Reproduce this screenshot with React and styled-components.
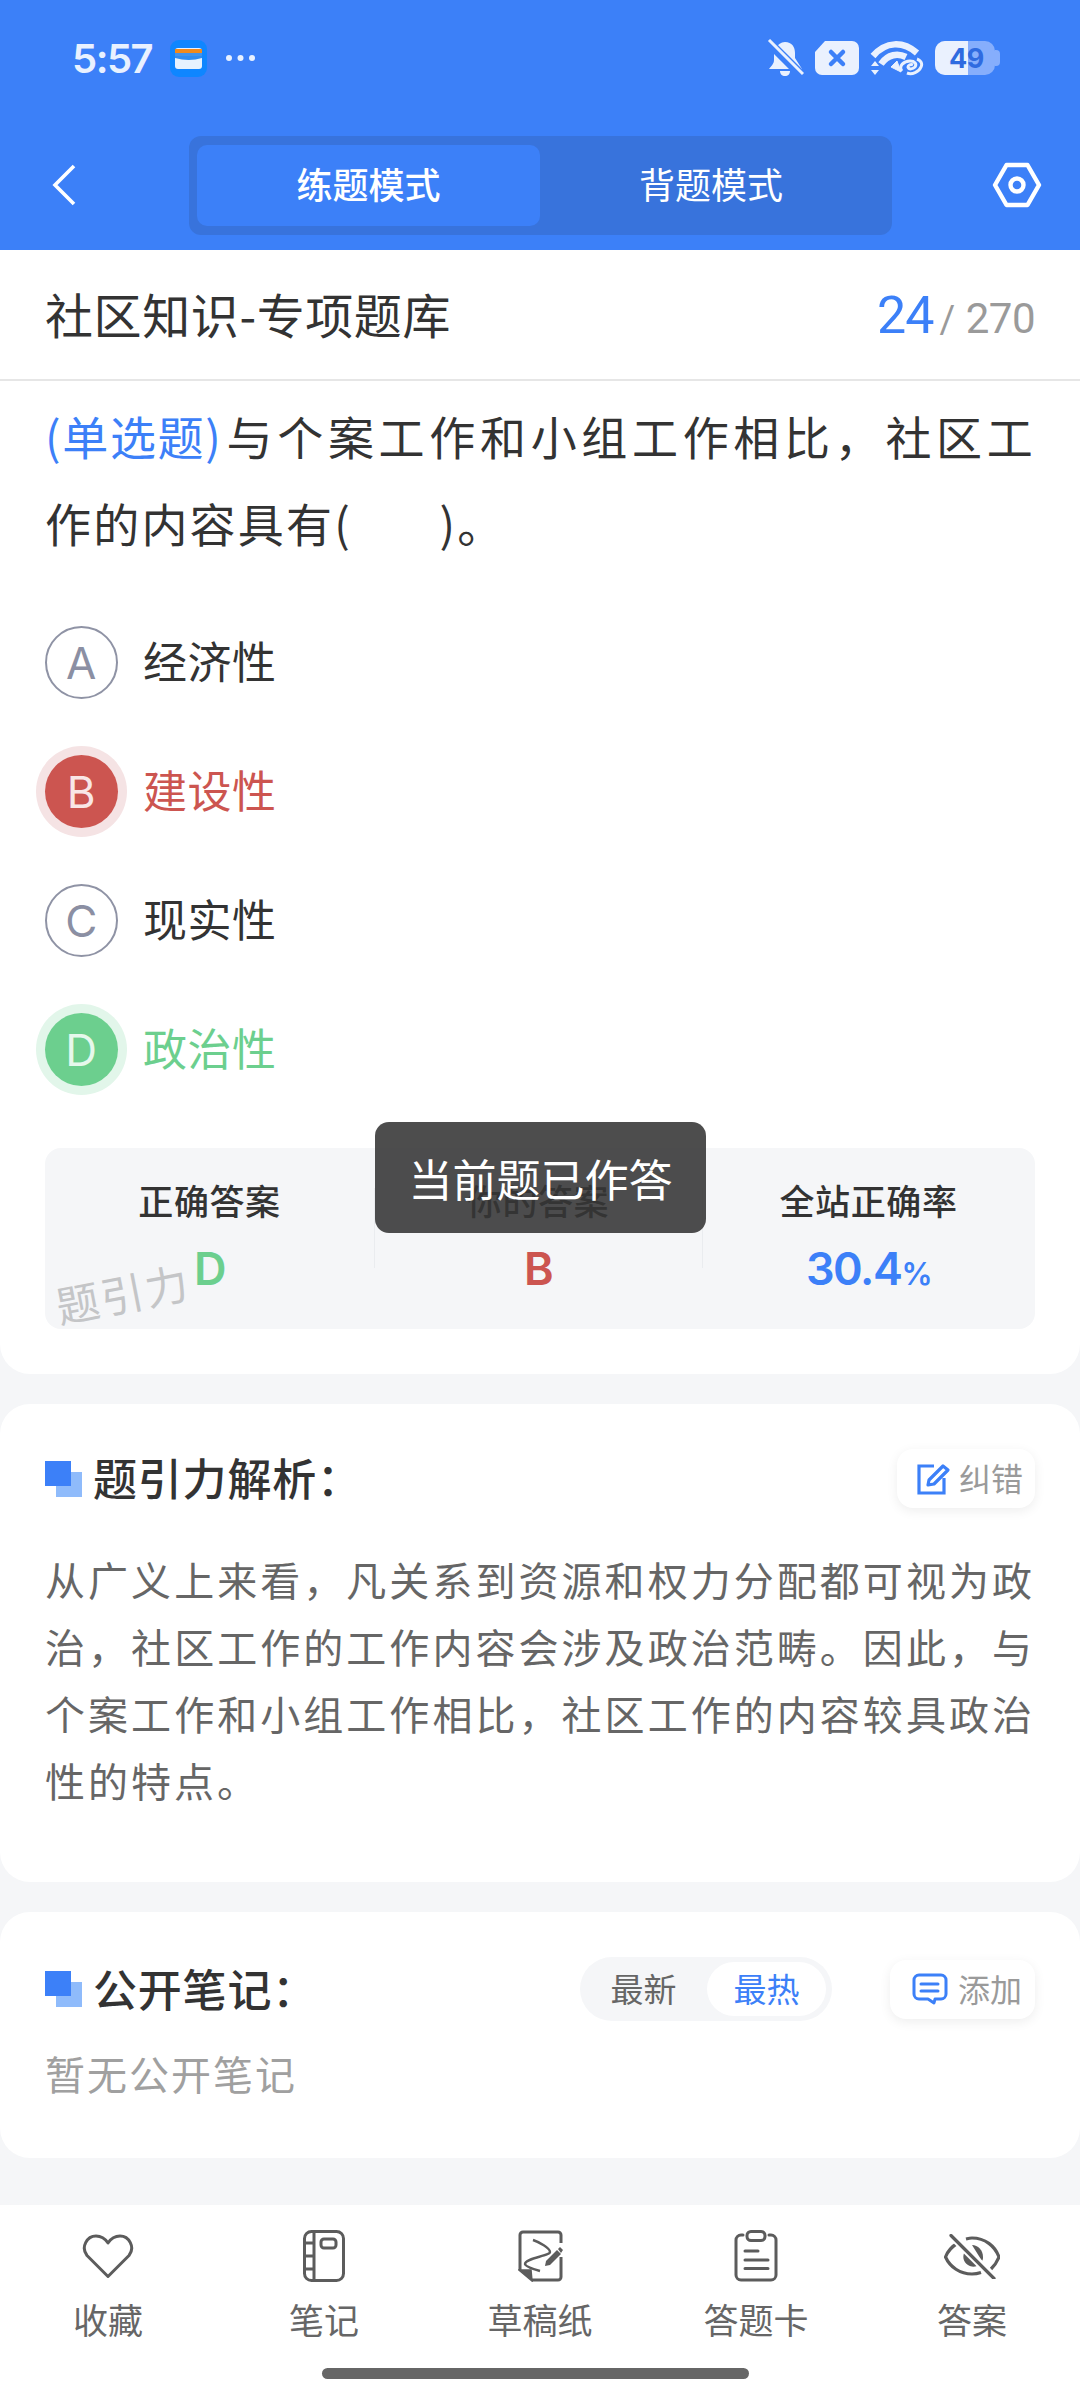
import React from "react"
import styled, { createGlobalStyle, css } from "styled-components"

const BLUE = "#3c80f8"
const RED = "#cc5550"
const GREEN = "#6ccf8e"
const INK = "#333333"
const CJK = `"Noto Sans CJK SC", "Noto Sans", sans-serif`
const LATIN = `Inter, "Noto Sans CJK SC", sans-serif`

const Global = createGlobalStyle`
  html, body { margin: 0; padding: 0; background: #f5f6f8; }
  * { box-sizing: border-box; }
  body { font-family: ${CJK}; color: ${INK}; }
`

const Page = styled.div`
  position: relative;
  width: 1080px;
  height: 2400px;
  overflow: hidden;
  display: flex;
  flex-direction: column;
  background: #f5f6f8;
`

const StatusBar = styled.div`
  height: 116px;
  flex: none;
  padding: 0 80px 0 72px;
  display: flex;
  align-items: center;
  justify-content: space-between;
  background: ${BLUE};
`

const StatusSide = styled.div`
  display: flex;
  align-items: center;
  gap: ${p => p.$gap}px;
`

const Time = styled.span`
  font-family: ${LATIN};
  font-size: 40px;
  font-weight: 600;
  letter-spacing: -1.5px;
  color: #e9f1ff;
`

const NavBar = styled.div`
  height: 134px;
  flex: none;
  display: grid;
  grid-template-columns: 189px 703px 1fr;
  align-items: start;
  background: ${BLUE};
`

const BackSlot = styled.div`
  margin: 47px 0 0 50px;
  line-height: 0;
`

const GearSlot = styled.div`
  justify-self: end;
  margin: 46px 38px 0 0;
  line-height: 0;
`

const Segment = styled.div`
  margin-top: 20px;
  height: 99px;
  padding: 9px 10px 9px 8px;
  display: grid;
  grid-template-columns: 343px 1fr;
  border-radius: 12px;
  background: #3873dc;
`

const SegmentItem = styled.div`
  padding-bottom: 5px;
  display: flex;
  align-items: center;
  justify-content: center;
  border-radius: 10px;
  font-size: 36px;
  font-weight: ${p => (p.$active ? 500 : 400)};
  color: #fff;
  ${p => p.$active && css`background: ${BLUE};`}
`

const Main = styled.div`
  flex: 1;
  display: flex;
  flex-direction: column;
  gap: 30px;
`

const QuestionCard = styled.section`
  background: #fff;
  border-radius: 0 0 30px 30px;
  padding-bottom: 45px;
`

const TitleRow = styled.div`
  height: 131px;
  padding: 0 45px 4px;
  display: flex;
  align-items: center;
  justify-content: space-between;
  border-bottom: 2px solid #e6e6e6;
`

const BankTitle = styled.h1`
  margin: 0;
  font-size: 48px;
  font-weight: 400;
  letter-spacing: 0.6px;
  color: ${INK};
`

const Counter = styled.div`
  padding-top: 5px;
  display: flex;
  align-items: baseline;
  font-family: Roboto, sans-serif;
  font-size: 42px;
  letter-spacing: -0.5px;
  color: #9a9a9a;
`

const CounterNow = styled.span`
  font-size: 52px;
  letter-spacing: -1px;
  color: ${BLUE};
`

const CounterSlash = styled.span`
  margin: 0 11px 0 6px;
  font-size: 38px;
`

const Question = styled.p`
  margin: 11px 45px 0;
  font-size: 46px;
  line-height: 87px;
  letter-spacing: 2.2px;
  text-align: justify;
  color: ${INK};
`

const QuestionType = styled.span`
  margin-right: 4px;
  letter-spacing: -0.8px;
  color: ${BLUE};
`

const KeepTogether = styled.span`
  white-space: nowrap;
`

const Options = styled.div`
  margin: 32px 45px 0;
  display: flex;
  flex-direction: column;
`

const Option = styled.div`
  height: 129px;
  display: flex;
  align-items: center;
  gap: 25px;
  font-size: 44px;
  letter-spacing: 0.5px;
  color: ${p => (p.$state === "wrong" ? RED : p.$state === "right" ? GREEN : INK)};
`

const OptionText = styled.span`
  padding-bottom: 5px;
`

const Letter = styled.span`
  width: 73px;
  height: 73px;
  flex: none;
  display: flex;
  align-items: center;
  justify-content: center;
  border-radius: 50%;
  font-family: ${LATIN};
  font-size: 44px;
  font-weight: 400;
  ${p => !p.$state && css`
    border: 2px solid #8f93a5;
    color: #8b8fa3;
  `}
  ${p => p.$state === "wrong" && css`
    background: ${RED};
    color: #f9e6e6;
    box-shadow: 0 0 0 9px #f5e3e4;
  `}
  ${p => p.$state === "right" && css`
    background: ${GREEN};
    color: #e6f8ec;
    box-shadow: 0 0 0 9px #e2f6ea;
  `}
`

const Stats = styled.div`
  position: relative;
  height: 181px;
  margin: 34px 45px 0;
  display: grid;
  grid-template-columns: 329px 328px 1fr;
  border-radius: 16px;
  background: #f5f6f8;
`

const Stat = styled.div`
  position: relative;
  padding-top: 32px;
  display: flex;
  flex-direction: column;
  align-items: center;
  gap: 24px;
  ${p => p.$divided && css`
    &::before {
      content: "";
      position: absolute;
      left: 0;
      top: 40px;
      height: 80px;
      width: 1px;
      background: #eaecef;
    }
  `}
`

const StatLabel = styled.div`
  font-size: 35px;
  line-height: 40px;
  font-weight: 500;
  letter-spacing: 0.6px;
  color: ${INK};
`

const StatValue = styled.div`
  font-family: ${LATIN};
  font-size: 45px;
  line-height: 50px;
  font-weight: 600;
  letter-spacing: -1.5px;
  color: ${p => p.$color};
`

const Percent = styled.span`
  font-size: 31px;
`

const Watermark = styled.div`
  position: absolute;
  left: 10px;
  top: 119px;
  font-size: 43px;
  line-height: 50px;
  letter-spacing: 2px;
  color: #c4c5c7;
  transform: rotate(-11deg);
`

const Toast = styled.div`
  position: absolute;
  left: 375px;
  top: 1122px;
  width: 331px;
  height: 111px;
  display: flex;
  align-items: center;
  justify-content: center;
  border-radius: 14px;
  background: rgba(52, 52, 52, 0.88);
  font-size: 44px;
  color: #fff;
`

const Card = styled.section`
  background: #fff;
  border-radius: 30px;
  padding: 45px 45px ${p => p.$bottom}px;
`

const CardHead = styled.div`
  display: flex;
  align-items: center;
`

const Mark = styled.span`
  position: relative;
  width: 37px;
  height: 36px;
  flex: none;
  &::before,
  &::after {
    content: "";
    position: absolute;
    width: 26px;
    height: 25px;
  }
  &::before {
    left: 11px;
    top: 11px;
    background: #8fbbfb;
  }
  &::after {
    left: 0;
    top: 0;
    background: ${BLUE};
  }
`

const CardTitle = styled.h2`
  margin: 0 auto 0 11px;
  padding-bottom: 3px;
  font-size: 44px;
  line-height: 56px;
  font-weight: 500;
  letter-spacing: 0.8px;
  color: ${INK};
`

const ChipButton = styled.div`
  width: ${p => p.$width}px;
  height: 59px;
  flex: none;
  padding-left: ${p => p.$left}px;
  display: flex;
  align-items: center;
  gap: ${p => p.$gap}px;
  border-radius: 16px;
  background: #fff;
  box-shadow: 0 3px 12px rgba(0, 0, 0, 0.07);
  font-size: 32px;
  color: #9a9a9a;
`

const ChipLabel = styled.span`
  padding-bottom: 3px;
`

const Analysis = styled.p`
  margin: 38px 0 0;
  font-size: 40px;
  line-height: 67px;
  letter-spacing: 3px;
  text-align: justify;
  color: #666666;
`

const Sorter = styled.div`
  width: 252px;
  height: 64px;
  margin-right: 58px;
  padding: 5px 6px 5px 0;
  flex: none;
  display: grid;
  grid-template-columns: 127px 1fr;
  border-radius: 32px;
  background: #f5f6f8;
`

const SorterItem = styled.div`
  padding-bottom: 3px;
  display: flex;
  align-items: center;
  justify-content: center;
  border-radius: 27px;
  font-size: 33px;
  color: ${p => (p.$active ? BLUE : "#666")};
  ${p => p.$active && css`background: #fff;`}
`

const EmptyNote = styled.div`
  margin-top: 27px;
  font-size: 40px;
  line-height: 50px;
  letter-spacing: 2px;
  color: #a0a0a0;
`

const TabBar = styled.nav`
  height: 195px;
  flex: none;
  padding-top: 25px;
  background: #fff;
`

const Tabs = styled.div`
  display: grid;
  grid-template-columns: repeat(5, 216px);
`

const Tab = styled.div`
  display: flex;
  flex-direction: column;
  align-items: center;
  gap: 17px;
  font-size: 35px;
  line-height: 40px;
  color: #666;
`

const TabIcon = styled.div`
  height: 52px;
  display: flex;
  align-items: center;
`

const HomeBar = styled.div`
  width: 427px;
  height: 11px;
  margin: 29px 0 0 322px;
  border-radius: 6px;
  background: #666;
`

const Wallet = () => (
  <svg width="37" height="37" viewBox="0 0 37 37">
    <rect width="37" height="37" rx="9" fill="#0f86ff" />
    <rect x="5" y="8" width="27" height="21" rx="3" fill="#e6f2fe" />
    <rect x="5" y="9" width="27" height="4" fill="#f08a1c" />
    <rect x="5" y="13" width="27" height="3" fill="#3f93ee" />
    <path d="M5 16h27v2q-13 4-27 0z" fill="#2f8cf0" />
  </svg>
)

const Dots = () => (
  <svg width="31" height="8" viewBox="0 0 31 8" fill="#e9f1ff">
    <circle cx="4" cy="4" r="3" />
    <circle cx="15.5" cy="4" r="3" />
    <circle cx="27" cy="4" r="3" />
  </svg>
)

const BellOff = () => (
  <svg width="37" height="38" viewBox="0 0 37 38" fill="#eaf1fe">
    <path d="M18 3c7 0 10 5 10 11v5l7 11H27L9 10c1-4 5-7 9-7z" />
    <path d="M7 15l15 15H2c2-3 5-5 5-9z" />
    <path d="M13 32h10c0 3-2 5-5 5s-5-2-5-5z" />
    <path d="M2 2l33 33" stroke={BLUE} strokeWidth="7" />
    <path d="M2 1l34 34" stroke="#eaf1fe" strokeWidth="3" />
  </svg>
)

const SimOff = () => (
  <svg width="44" height="34" viewBox="0 0 44 34">
    <path d="M10 0h27a7 7 0 0 1 7 7v20a7 7 0 0 1-7 7H7a7 7 0 0 1-7-7V11z" fill="#eaf1fe" />
    <path d="M16 11l12 12M28 11L16 23" stroke={BLUE} strokeWidth="4.5" strokeLinecap="round" />
  </svg>
)

const WifiSwirl = () => (
  <svg width="54" height="36" viewBox="0 0 54 36" fill="none" stroke="#eaf1fe">
    <path d="M3 16C16 1 33 1 47 13" strokeWidth="6.5" />
    <path d="M11 24C18 14 28 13 36 17" strokeWidth="6.5" />
    <path d="M21 27l6-6 4 11z" fill="#eaf1fe" strokeWidth="1" />
    <path d="M5 21l4 5H1zM5 35l4-5H1z" fill="#eaf1fe" stroke="none" />
    <path d="M32 31c-4-5 2-10 8-10 5 0 7 3 5 6-2 2-6 3-7 0 0-2 3-3 5-2" strokeWidth="3" />
    <path d="M37 33c5 2 12-1 14-6 2-4-1-7-4-8" strokeWidth="3" />
  </svg>
)

const Battery = styled.div`
  display: flex;
  align-items: center;
`

const BatteryBody = styled.div`
  position: relative;
  width: 60px;
  height: 34px;
  display: flex;
  align-items: center;
  padding-left: 14px;
  border-radius: 10px;
  overflow: hidden;
  background: #86aefc;
  font-family: ${LATIN};
  font-size: 27px;
  font-weight: 700;
  letter-spacing: -0.5px;
  color: #2f6be0;
  &::before {
    content: "";
    position: absolute;
    left: 0;
    top: 0;
    bottom: 0;
    width: 33px;
    background: #eaf1fe;
  }
`

const BatteryNib = styled.span`
  width: 5px;
  height: 16px;
  border-radius: 0 4px 4px 0;
  background: #86aefc;
`

const BatteryText = styled.span`
  position: relative;
`

const Back = () => (
  <svg width="28" height="44" viewBox="0 0 28 44" fill="none" stroke="#fff" strokeWidth="3.6">
    <path d="M24 3L5 22l19 19" />
  </svg>
)

const Gear = () => (
  <svg width="50" height="46" viewBox="0 0 50 46" fill="none" stroke="#fff" strokeWidth="4.4" strokeLinejoin="round">
    <path d="M14.5 3h21L47 23 35.5 43h-21L3 23z" />
    <circle cx="25" cy="23" r="6.5" />
  </svg>
)

const EditIcon = () => (
  <svg width="34" height="32" viewBox="0 0 34 32" fill="none" stroke={BLUE} strokeWidth="3.2">
    <path d="M17 3H2v27h25V15" />
    <path d="M12 17L26 3l5 4-14 14-6 1z" strokeLinejoin="round" />
  </svg>
)

const CommentIcon = () => (
  <svg width="36" height="32" viewBox="0 0 36 32" fill="none" stroke={BLUE} strokeWidth="3">
    <path d="M7 2h22a5 5 0 0 1 5 5v14a5 5 0 0 1-5 5h-4l-2 0-1 4-6-4H7a5 5 0 0 1-5-5V7a5 5 0 0 1 5-5z" strokeLinejoin="round" />
    <path d="M9 11h17M9 18h17" strokeLinecap="round" />
  </svg>
)

const TAB_STROKE = { fill: "none", stroke: "#5c5c5c", strokeWidth: 3 }

const Heart = () => (
  <svg width="52" height="45" viewBox="0 0 52 45" {...TAB_STROKE}>
    <path d="M26 42.5L5 21.5C-1.5 13 5 2 14 2c5 0 9 2.5 12 7 3-4.5 7-7 12-7 9 0 15.5 11 9 19.5z" strokeLinejoin="round" />
  </svg>
)

const Notebook = () => (
  <svg width="42" height="52" viewBox="0 0 42 52" {...TAB_STROKE}>
    <rect x="1.5" y="1.5" width="39" height="49" rx="7" />
    <path d="M11 2v48M2 13h9M2 26h9M2 39h9" />
    <rect x="18" y="9" width="15" height="9" rx="3" />
  </svg>
)

const Draft = () => (
  <svg width="45" height="52" viewBox="0 0 45 52" {...TAB_STROKE}>
    <path d="M14 50H40a3 3 0 0 0 3-3V27M43 13V5a3 3 0 0 0-3-3H5a3 3 0 0 0-3 3v35" />
    <path d="M1 40h12l1 11z" fill="#5c5c5c" strokeWidth="1.5" />
    <path d="M15 10c6 2 17 8 17 12 0 4-25 6-25 12 0 2 8 5 15 7" strokeWidth="2.4" />
    <path d="M27 36l1-5 11-11 4 4-11 11z" fill="#5c5c5c" stroke="none" />
    <path d="M40 19l2-2 3 3-2 3z" fill="#5c5c5c" stroke="none" />
  </svg>
)

const Clipboard = () => (
  <svg width="44" height="52" viewBox="0 0 44 52" {...TAB_STROKE}>
    <path d="M9 5H7a5 5 0 0 0-5 5v35a5 5 0 0 0 5 5h30a5 5 0 0 0 5-5V10a5 5 0 0 0-5-5h-2" strokeLinecap="round" />
    <rect x="13" y="1.5" width="18" height="9" rx="4" />
    <path d="M11 21h13M11 30h23M11 38.5h23" strokeLinecap="round" />
  </svg>
)

const EyeOff = () => (
  <svg width="56" height="45" viewBox="0 0 56 45" {...TAB_STROKE} strokeWidth="3.2">
    <path d="M14 9C7 13 3 19 1.5 23 6 33 16 40 28 40c3 0 6-.5 9-1.5M22 5c2-.5 4-1 6-1 13 0 23 8 27 19-2 5-5 9-8 12" />
    <path d="M21 17c-3 5-2 11 3 14 3 2 6 2 9 1z" fill="#5c5c5c" stroke="none" />
    <path d="M28 11c6 0 11 5 11 12 0 1 0 3-1 4z" fill="#5c5c5c" stroke="none" />
    <path d="M7 1l43 43" stroke="#fff" strokeWidth="8" />
    <path d="M7 1.5l43 43" strokeLinecap="round" />
  </svg>
)

const options = [
  { letter: "A", text: "经济性" },
  { letter: "B", text: "建设性", state: "wrong" },
  { letter: "C", text: "现实性" },
  { letter: "D", text: "政治性", state: "right" },
]

const tabs = [
  { label: "收藏", Icon: Heart },
  { label: "笔记", Icon: Notebook },
  { label: "草稿纸", Icon: Draft },
  { label: "答题卡", Icon: Clipboard },
  { label: "答案", Icon: EyeOff },
]

export default function App() {
  return (
    <Page>
      <Global />
      <StatusBar>
        <StatusSide $gap={18}>
          <Time>5:57</Time>
          <Wallet />
          <Dots />
        </StatusSide>
        <StatusSide $gap={11}>
          <BellOff />
          <SimOff />
          <WifiSwirl />
          <Battery>
            <BatteryBody><BatteryText>49</BatteryText></BatteryBody>
            <BatteryNib />
          </Battery>
        </StatusSide>
      </StatusBar>

      <NavBar>
        <BackSlot><Back /></BackSlot>
        <Segment>
          <SegmentItem $active>练题模式</SegmentItem>
          <SegmentItem>背题模式</SegmentItem>
        </Segment>
        <GearSlot><Gear /></GearSlot>
      </NavBar>

      <Main>
        <QuestionCard>
          <TitleRow>
            <BankTitle>社区知识-专项题库</BankTitle>
            <Counter>
              <CounterNow>24</CounterNow>
              <CounterSlash>/</CounterSlash>
              270
            </Counter>
          </TitleRow>
          <Question>
            <QuestionType>(单选题)</QuestionType>与个案工作和小组工作相比，社区工<KeepTogether>作的</KeepTogether>内容具有(&nbsp;&nbsp;&nbsp;&nbsp;&nbsp;&nbsp;&nbsp;)。
          </Question>
          <Options>
            {options.map(o => (
              <Option key={o.letter} $state={o.state}>
                <Letter $state={o.state}>{o.letter}</Letter>
                <OptionText>{o.text}</OptionText>
              </Option>
            ))}
          </Options>
          <Stats>
            <Stat>
              <StatLabel>正确答案</StatLabel>
              <StatValue $color={GREEN}>D</StatValue>
            </Stat>
            <Stat $divided>
              <StatLabel>你的答案</StatLabel>
              <StatValue $color={RED}>B</StatValue>
            </Stat>
            <Stat $divided>
              <StatLabel>全站正确率</StatLabel>
              <StatValue $color={BLUE}>30.4<Percent>%</Percent></StatValue>
            </Stat>
            <Watermark>题引力</Watermark>
          </Stats>
        </QuestionCard>

        <Card $bottom={68}>
          <CardHead>
            <Mark />
            <CardTitle>题引力解析：</CardTitle>
            <ChipButton $width={138} $left={20} $gap={8}>
              <EditIcon />
              <ChipLabel>纠错</ChipLabel>
            </ChipButton>
          </CardHead>
          <Analysis>
            从广义上来看，凡关系到资源和权力分配都可视为政治，社区工作的工作内容会涉及政治范畴。因此，与个案工作和小组工作相比，社区工作的内容较具政治性的特点。
          </Analysis>
        </Card>

        <Card $bottom={60}>
          <CardHead>
            <Mark />
            <CardTitle>公开笔记：</CardTitle>
            <Sorter>
              <SorterItem>最新</SorterItem>
              <SorterItem $active>最热</SorterItem>
            </Sorter>
            <ChipButton $width={145} $left={22} $gap={10}>
              <CommentIcon />
              <ChipLabel>添加</ChipLabel>
            </ChipButton>
          </CardHead>
          <EmptyNote>暂无公开笔记</EmptyNote>
        </Card>
      </Main>

      <TabBar>
        <Tabs>
          {tabs.map(({ label, Icon }) => (
            <Tab key={label}>
              <TabIcon><Icon /></TabIcon>
              {label}
            </Tab>
          ))}
        </Tabs>
        <HomeBar />
      </TabBar>

      <Toast>当前题已作答</Toast>
    </Page>
  )
}
